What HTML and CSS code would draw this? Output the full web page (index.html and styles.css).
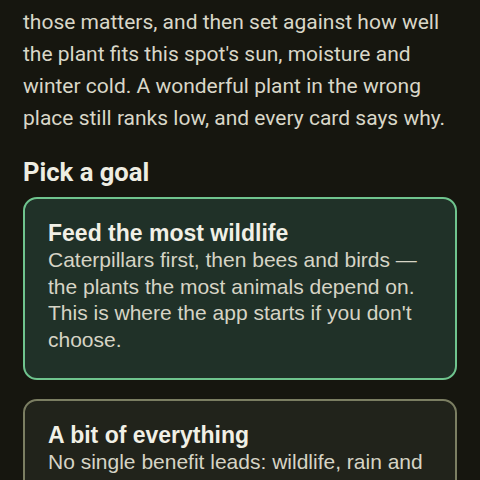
FILE: index.html
```html
<!DOCTYPE html>
<html lang="en">
<head>
<meta charset="utf-8">
<title>Garden goals</title>
<link rel="stylesheet" href="styles.css">
</head>
<body>
<main class="page">
  <h1 class="title">What matters most?</h1>
  <p class="intro">Your goal decides the order of the list. Every plant gets a score by how much you say each of<br>those matters, and then set against how well the plant fits this spot's sun, moisture and winter cold. A wonderful plant in the wrong place still ranks low, and every card says why.</p>
  <h2 class="section">Pick a goal</h2>
  <div class="goals">
    <button class="goal goal-active" type="button">
      <span class="goal-name">Feed the most wildlife</span>
      <span class="goal-desc">Caterpillars first, then bees and birds — the plants the most animals depend on. This is where the app starts if you don't choose.</span>
    </button>
    <button class="goal" type="button">
      <span class="goal-name">A bit of everything</span>
      <span class="goal-desc">No single benefit leads: wildlife, rain and soil, shade and food all count the same.</span>
    </button>
  </div>
</main>
<script src="app.js"></script>
</body>
</html>
```
FILE: styles.css
```css
html, body {
  margin: 0;
  padding: 0;
  background: #16160f;
}
.page {
  padding: 16px 23px 200px;
  font-family: Roboto, "Noto Sans", sans-serif;
  color: #d9d7c8;
}
.title {
  margin: 0 0 12px;
  font-size: 28px;
  font-weight: 700;
  color: #eeede2;
}
.intro {
  margin: 0;
  font-size: 21px;
  line-height: 32px;
}
.section {
  margin: 22px 0 9px;
  font-size: 25.6px;
  line-height: 32px;
  font-weight: 700;
  color: #eeede2;
}
.goals {
  display: flex;
  flex-direction: column;
  gap: 19px;
}
.goal {
  display: flex;
  flex-direction: column;
  text-align: left;
  padding: 20px 23px 24px;
  border-radius: 14px;
  border: 2px solid #7b7e62;
  background: #21231b;
  font-family: "Liberation Sans", Arial, sans-serif;
  color: #d6d4c5;
  cursor: pointer;
}
.goal-active {
  border-color: #6fc48e;
  background: #203128;
}
.goal-name {
  font-size: 23px;
  font-weight: 700;
  line-height: 28px;
  color: #f1f0e6;
}
.goal-desc {
  font-size: 21px;
  line-height: 26.7px;
}
```
FILE: app.js
```js
var intro = document.querySelector('.intro');
window.scrollTo(0, intro.offsetTop + intro.offsetHeight - 134);
```
